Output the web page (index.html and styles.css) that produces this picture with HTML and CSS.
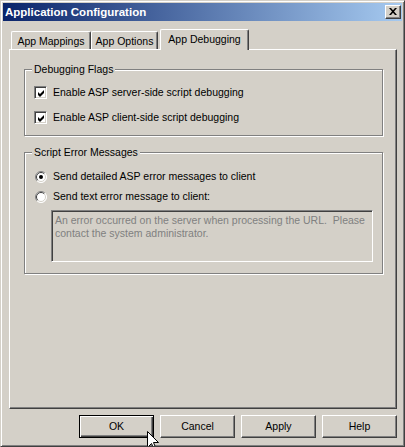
FILE: index.html
```html
<!DOCTYPE html>
<html>
<head>
<meta charset="utf-8">
<link rel="stylesheet" href="styles.css">
</head>
<body>
<div class="window">
  <div class="titlebar">
    <span class="title">Application Configuration</span>
    <div class="close">
      <svg width="8" height="7" viewBox="0 0 8 7"><path d="M0 0h2l2 2.2L6 0h2L5 3.5 8 7H6L4 4.8 2 7H0l3-3.5z" fill="#000"/></svg>
    </div>
  </div>
  <div class="body">
    <div class="tabs">
      <div class="tab t1">App Mappings</div>
      <div class="tab t2">App Options</div>
      <div class="tab active">App Debugging</div>
    </div>
    <div class="panel">
      <div class="group g1">
        <div class="legend">Debugging Flags</div>
        <div class="rows checks">
          <div class="row">
            <span class="check"><svg width="9" height="9" viewBox="0 0 9 9"><path d="M1 3l2 2 4-4v3l-4 4-2-2z" fill="#000"/></svg></span>
            <span class="label">Enable ASP server-side script debugging</span>
          </div>
          <div class="row">
            <span class="check"><svg width="9" height="9" viewBox="0 0 9 9"><path d="M1 3l2 2 4-4v3l-4 4-2-2z" fill="#000"/></svg></span>
            <span class="label">Enable ASP client-side script debugging</span>
          </div>
        </div>
      </div>
      <div class="group g2">
        <div class="legend">Script Error Messages</div>
        <div class="rows radios">
          <div class="row">
            <svg class="radio" width="12" height="12" viewBox="0 0 12 12">
              <circle cx="6" cy="6" r="5.5" fill="#fff"/>
              <path d="M9.9 2.1A5.5 5.5 0 0 0 2.1 9.9" stroke="#808080" fill="none"/>
              <path d="M2.1 9.9A5.5 5.5 0 0 0 9.9 2.1" stroke="#fff" fill="none"/>
              <path d="M9.2 2.8A4.5 4.5 0 0 0 2.8 9.2" stroke="#404040" fill="none"/>
              <path d="M2.8 9.2A4.5 4.5 0 0 0 9.2 2.8" stroke="#d4d0c8" fill="none"/>
              <circle cx="6" cy="6" r="2" fill="#000"/>
            </svg>
            <span class="label">Send detailed ASP error messages to client</span>
          </div>
          <div class="row">
            <svg class="radio" width="12" height="12" viewBox="0 0 12 12">
              <circle cx="6" cy="6" r="5.5" fill="#fff"/>
              <path d="M9.9 2.1A5.5 5.5 0 0 0 2.1 9.9" stroke="#808080" fill="none"/>
              <path d="M2.1 9.9A5.5 5.5 0 0 0 9.9 2.1" stroke="#fff" fill="none"/>
              <path d="M9.2 2.8A4.5 4.5 0 0 0 2.8 9.2" stroke="#404040" fill="none"/>
              <path d="M2.8 9.2A4.5 4.5 0 0 0 9.2 2.8" stroke="#d4d0c8" fill="none"/>
            </svg>
            <span class="label">Send text error message to client:</span>
          </div>
        </div>
        <div class="msg">An error occurred on the server when processing the URL.&nbsp; Please<br>contact the system administrator.</div>
      </div>
    </div>
    <div class="buttons">
      <div class="btn default">OK</div>
      <div class="btn">Cancel</div>
      <div class="btn">Apply</div>
      <div class="btn">Help</div>
    </div>
  </div>
  <svg class="cursor" width="12" height="19" viewBox="0 0 12 19"><path d="M0.5 0.5V16.5L4.5 12.5L7 18.5L9 17.5L6.5 11.5H11.5Z" fill="#fff" stroke="#000" stroke-linejoin="miter"/></svg>
</div>
</body>
</html>
```
FILE: styles.css
```css
html, body {
  margin: 0;
  padding: 0;
  background: #d4d0c8;
}
.window {
  position: relative;
  box-sizing: border-box;
  width: 405px;
  height: 447px;
  overflow: hidden;
  background: #d4d0c8;
  border: 1px solid;
  border-color: #d4d0c8 #404040 #404040 #d4d0c8;
  box-shadow: inset 1px 1px 0 #fff, inset -1px -1px 0 #808080;
  padding: 2px;
  font-family: "Liberation Sans", Arial, sans-serif;
  font-size: 10.5px;
  color: #000;
}
.titlebar {
  height: 18px;
  display: flex;
  align-items: center;
  justify-content: space-between;
  background: linear-gradient(to right, #0a246a, #a6caf0);
  padding-left: 2px;
}
.title {
  color: #fff;
  font-weight: bold;
  font-size: 11.5px;
  line-height: 14px;
}
.close {
  box-sizing: border-box;
  width: 16px;
  height: 14px;
  margin-right: 1px;
  background: #d4d0c8;
  border: 1px solid;
  border-color: #fff #404040 #404040 #fff;
  box-shadow: inset -1px -1px 0 #808080;
  display: flex;
  align-items: center;
  justify-content: center;
  padding: 0 1px 1px 0;
}
.body {
  padding: 8px 0 0 6px;
}
.tabs {
  display: flex;
  align-items: flex-end;
  height: 20px;
  padding-left: 2px;
  position: relative;
  z-index: 1;
}
.tab {
  box-sizing: border-box;
  height: 18px;
  background: #d4d0c8;
  border-top: 1px solid #fff;
  border-left: 1px solid #fff;
  border-right: 1px solid #404040;
  box-shadow: inset -1px 0 0 #808080;
  border-radius: 2px 2px 0 0;
  line-height: 17px;
  padding-top: 1px;
  text-align: center;
}
.t1 { width: 80px; }
.t2 { width: 67px; margin-left: 0; }
.tab.active {
  width: 89px;
  height: 21px;
  margin-left: 2px;
  margin-bottom: -1px;
  padding-top: 0;
  line-height: 18px;
}
.panel {
  box-sizing: border-box;
  width: 388px;
  height: 360px;
  border: 1px solid;
  border-color: #fff #404040 #404040 #fff;
  box-shadow: inset -1px -1px 0 #808080;
  padding: 19px 0 0 14px;
}
.group {
  box-sizing: border-box;
  width: 359px;
  border: 1px solid #808080;
  box-shadow: inset 1px 1px 0 #fff, 1px 1px 0 #fff;
  padding-left: 9px;
}
.g1 { height: 67px; }
.g2 { height: 122px; margin-top: 16px; }
.legend {
  width: max-content;
  height: 13px;
  line-height: 13px;
  margin: -7px 0 0 -2px;
  padding: 0 2px;
  background: #d4d0c8;
  position: relative;
}
.rows {
  display: flex;
  flex-direction: column;
}
.checks { margin-top: 10px; gap: 12px; }
.radios { margin-top: 11px; gap: 7px; }
.row {
  display: flex;
  align-items: center;
  height: 13px;
  line-height: 13px;
}
.check {
  box-sizing: border-box;
  width: 13px;
  height: 13px;
  background: #fff;
  border: 1px solid;
  border-color: #808080 #fff #fff #808080;
  box-shadow: inset 1px 1px 0 #404040, inset -1px -1px 0 #d4d0c8;
  padding: 1px 0 0 1px;
  display: flex;
  margin-right: 6px;
}
.check svg { display: block; margin: 1px 0 0 1px; }
.radio {
  display: block;
  margin: 0 6px 0 1px;
}
.msg {
  box-sizing: border-box;
  width: 322px;
  height: 52px;
  margin: 7px 0 0 17px;
  border: 1px solid;
  border-color: #808080 #fff #fff #808080;
  box-shadow: inset 1px 1px 0 #404040, inset -1px -1px 0 #d4d0c8;
  padding: 3px 0 0 3px;
  line-height: 13px;
  color: #808080;
  white-space: nowrap;
}
.buttons {
  display: flex;
  justify-content: flex-end;
  gap: 6px;
  width: 388px;
  margin-top: 6px;
}
.btn {
  box-sizing: border-box;
  width: 75px;
  height: 23px;
  border: 1px solid;
  border-color: #fff #404040 #404040 #fff;
  box-shadow: inset -1px -1px 0 #808080;
  text-align: center;
  line-height: 20px;
}
.btn.default {
  border-color: #000;
  box-shadow: inset 1px 1px 0 #fff, inset -1px -1px 0 #404040, inset -2px -2px 0 #808080;
}
.cursor {
  position: absolute;
  left: 146px;
  top: 430px;
}
```
